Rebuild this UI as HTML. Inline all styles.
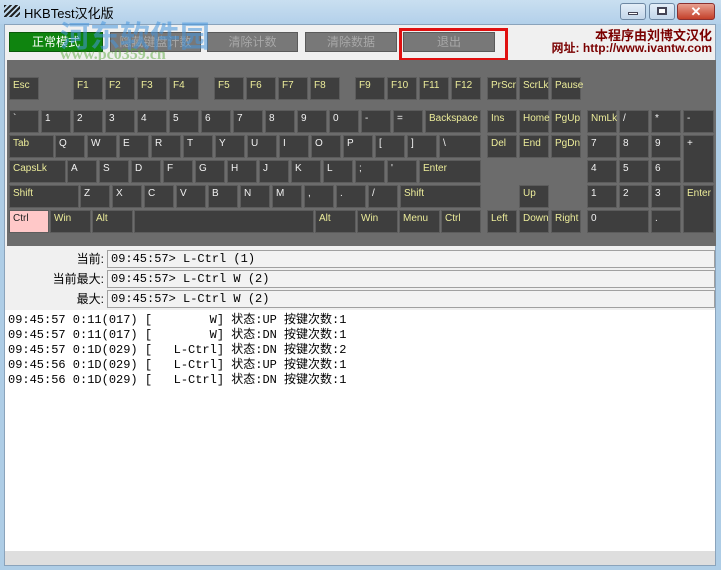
<!DOCTYPE html>
<html><head><meta charset="utf-8"><style>
*{margin:0;padding:0;box-sizing:border-box}
body{width:721px;height:570px;overflow:hidden;background:#aecde6;font-family:"Liberation Sans","Noto Sans CJK SC",sans-serif;position:relative}
.abs{position:absolute}
#title{left:0;top:0;width:721px;height:24px;background:linear-gradient(#c9dff0,#b3d0ea)}
#client{left:4px;top:24px;width:712px;height:542px;background:#f0f0f0;border:1px solid #8aa3bb}
.btn{position:absolute;top:32px;height:20px;background:#787878;border:1px solid #5a5a5a;color:#a8a8a8;font-size:12px;text-align:center;line-height:18px}
#kb{left:7px;top:60px;width:709px;height:186px;background:#6c6c6c}
.k{position:absolute;height:23px;background:#3e3e3e;border:1px solid #5c5c5c;color:#f2f2f2;font-size:10px;padding:2px 0 0 3px;font-family:"Liberation Sans",sans-serif}
.y{color:#ecec9a}
.f{position:absolute;left:107px;width:608px;height:18px;border:1px solid #a0a0a0;background:#f2f2f2;font:12px "Liberation Mono",monospace;line-height:16px;padding-left:3px}
.lb{position:absolute;width:104px;text-align:right;font-size:12px;line-height:18px}
#log{left:5px;top:310px;width:710px;height:241px;background:#fff;font:12px "Liberation Mono","Noto Sans CJK SC",monospace;line-height:15px;padding:3px 0 0 3px;white-space:pre}
</style></head><body>
<div id="title" class="abs"></div>
<div class="abs" style="left:4px;top:5px;width:16px;height:12px;background:repeating-linear-gradient(135deg,#222 0 2px,transparent 2px 4px)"></div>
<div class="abs" style="left:24px;top:3px;font-size:13px;color:#000">HKBTest汉化版</div>
<div class="abs" style="left:620px;top:3px;width:26px;height:17px;border:1px solid #6d87a3;border-radius:3px;background:linear-gradient(#e4eef8,#c3d6ea)"></div>
<div class="abs" style="left:628px;top:12px;width:10px;height:3px;background:#fff;border:1px solid #445"></div>
<div class="abs" style="left:649px;top:3px;width:26px;height:17px;border:1px solid #6d87a3;border-radius:3px;background:linear-gradient(#e4eef8,#c3d6ea)"></div>
<div class="abs" style="left:657px;top:7px;width:10px;height:8px;border:2px solid #445;background:#fff"></div>
<div class="abs" style="left:677px;top:3px;width:38px;height:17px;border:1px solid #8a3030;border-radius:3px;background:linear-gradient(#e8a090,#c4402a);color:#fff;font-size:13px;text-align:center;line-height:15px;font-weight:bold">✕</div>
<div id="client" class="abs"></div>

<div class="btn" style="left:9px;width:94px;background:#0f840f;border-color:#0a5a0a;color:#fff">正常模式</div>
<div class="btn" style="left:110px;width:91px">隐藏键盘计数</div>
<div class="btn" style="left:207px;width:91px">清除计数</div>
<div class="btn" style="left:305px;width:92px">清除数据</div>
<div class="btn" style="left:403px;width:92px">退出</div>
<div class="abs" style="left:399px;top:28px;width:109px;height:33px;border:3px solid #e01010"></div>
<div class="abs" style="right:9px;top:25px;font-size:13px;font-weight:bold;color:#7a0000">本程序由刘博文汉化</div>
<div class="abs" style="right:9px;top:39px;font-size:12px;font-weight:bold;color:#7a0000">网址: http://www.ivantw.com</div>
<div class="abs" style="left:60px;top:12px;font-size:30px;font-weight:bold;color:rgba(70,150,220,.55)">河东软件园</div>
<div class="abs" style="left:60px;top:46px;font-size:16px;font-weight:bold;color:rgba(90,170,60,.5);font-family:'Liberation Serif',serif">www.pc0359.cn</div>

<div id="kb" class="abs">
<div style="position:relative;left:-7px;top:-60px">
<div class="k y" style="left:9px;top:77px;width:30px">Esc</div>
<div class="k y" style="left:73px;top:77px;width:30px">F1</div>
<div class="k y" style="left:105px;top:77px;width:30px">F2</div>
<div class="k y" style="left:137px;top:77px;width:30px">F3</div>
<div class="k y" style="left:169px;top:77px;width:30px">F4</div>
<div class="k y" style="left:214px;top:77px;width:30px">F5</div>
<div class="k y" style="left:246px;top:77px;width:30px">F6</div>
<div class="k y" style="left:278px;top:77px;width:30px">F7</div>
<div class="k y" style="left:310px;top:77px;width:30px">F8</div>
<div class="k y" style="left:355px;top:77px;width:30px">F9</div>
<div class="k y" style="left:387px;top:77px;width:30px">F10</div>
<div class="k y" style="left:419px;top:77px;width:30px">F11</div>
<div class="k y" style="left:451px;top:77px;width:30px">F12</div>
<div class="k y" style="left:487px;top:77px;width:30px">PrScr</div>
<div class="k y" style="left:519px;top:77px;width:30px">ScrLk</div>
<div class="k y" style="left:551px;top:77px;width:30px">Pause</div>

<div class="k" style="left:9px;top:110px;width:30px">`</div>
<div class="k" style="left:41px;top:110px;width:30px">1</div>
<div class="k" style="left:73px;top:110px;width:30px">2</div>
<div class="k" style="left:105px;top:110px;width:30px">3</div>
<div class="k" style="left:137px;top:110px;width:30px">4</div>
<div class="k" style="left:169px;top:110px;width:30px">5</div>
<div class="k" style="left:201px;top:110px;width:30px">6</div>
<div class="k" style="left:233px;top:110px;width:30px">7</div>
<div class="k" style="left:265px;top:110px;width:30px">8</div>
<div class="k" style="left:297px;top:110px;width:30px">9</div>
<div class="k" style="left:329px;top:110px;width:30px">0</div>
<div class="k" style="left:361px;top:110px;width:30px">-</div>
<div class="k" style="left:393px;top:110px;width:30px">=</div>
<div class="k y" style="left:425px;top:110px;width:56px">Backspace</div>
<div class="k y" style="left:487px;top:110px;width:30px">Ins</div>
<div class="k y" style="left:519px;top:110px;width:30px">Home</div>
<div class="k y" style="left:551px;top:110px;width:30px">PgUp</div>
<div class="k y" style="left:587px;top:110px;width:30px">NmLk</div>
<div class="k" style="left:619px;top:110px;width:30px">/</div>
<div class="k" style="left:651px;top:110px;width:30px">*</div>
<div class="k" style="left:683px;top:110px;width:31px">-</div>

<div class="k y" style="left:9px;top:135px;width:45px">Tab</div>
<div class="k" style="left:55px;top:135px;width:30px">Q</div>
<div class="k" style="left:87px;top:135px;width:30px">W</div>
<div class="k" style="left:119px;top:135px;width:30px">E</div>
<div class="k" style="left:151px;top:135px;width:30px">R</div>
<div class="k" style="left:183px;top:135px;width:30px">T</div>
<div class="k" style="left:215px;top:135px;width:30px">Y</div>
<div class="k" style="left:247px;top:135px;width:30px">U</div>
<div class="k" style="left:279px;top:135px;width:30px">I</div>
<div class="k" style="left:311px;top:135px;width:30px">O</div>
<div class="k" style="left:343px;top:135px;width:30px">P</div>
<div class="k" style="left:375px;top:135px;width:30px">[</div>
<div class="k" style="left:407px;top:135px;width:30px">]</div>
<div class="k" style="left:439px;top:135px;width:42px">\</div>
<div class="k y" style="left:487px;top:135px;width:30px">Del</div>
<div class="k y" style="left:519px;top:135px;width:30px">End</div>
<div class="k y" style="left:551px;top:135px;width:30px">PgDn</div>
<div class="k" style="left:587px;top:135px;width:30px">7</div>
<div class="k" style="left:619px;top:135px;width:30px">8</div>
<div class="k" style="left:651px;top:135px;width:30px">9</div>
<div class="k" style="left:683px;top:135px;width:31px;height:48px">+</div>

<div class="k y" style="left:9px;top:160px;width:57px">CapsLk</div>
<div class="k" style="left:67px;top:160px;width:30px">A</div>
<div class="k" style="left:99px;top:160px;width:30px">S</div>
<div class="k" style="left:131px;top:160px;width:30px">D</div>
<div class="k" style="left:163px;top:160px;width:30px">F</div>
<div class="k" style="left:195px;top:160px;width:30px">G</div>
<div class="k" style="left:227px;top:160px;width:30px">H</div>
<div class="k" style="left:259px;top:160px;width:30px">J</div>
<div class="k" style="left:291px;top:160px;width:30px">K</div>
<div class="k" style="left:323px;top:160px;width:30px">L</div>
<div class="k" style="left:355px;top:160px;width:30px">;</div>
<div class="k" style="left:387px;top:160px;width:30px">'</div>
<div class="k y" style="left:419px;top:160px;width:62px">Enter</div>
<div class="k" style="left:587px;top:160px;width:30px">4</div>
<div class="k" style="left:619px;top:160px;width:30px">5</div>
<div class="k" style="left:651px;top:160px;width:30px">6</div>

<div class="k y" style="left:9px;top:185px;width:70px">Shift</div>
<div class="k" style="left:80px;top:185px;width:30px">Z</div>
<div class="k" style="left:112px;top:185px;width:30px">X</div>
<div class="k" style="left:144px;top:185px;width:30px">C</div>
<div class="k" style="left:176px;top:185px;width:30px">V</div>
<div class="k" style="left:208px;top:185px;width:30px">B</div>
<div class="k" style="left:240px;top:185px;width:30px">N</div>
<div class="k" style="left:272px;top:185px;width:30px">M</div>
<div class="k" style="left:304px;top:185px;width:30px">,</div>
<div class="k" style="left:336px;top:185px;width:30px">.</div>
<div class="k" style="left:368px;top:185px;width:30px">/</div>
<div class="k y" style="left:400px;top:185px;width:81px">Shift</div>
<div class="k y" style="left:519px;top:185px;width:30px">Up</div>
<div class="k" style="left:587px;top:185px;width:30px">1</div>
<div class="k" style="left:619px;top:185px;width:30px">2</div>
<div class="k" style="left:651px;top:185px;width:30px">3</div>
<div class="k y" style="left:683px;top:185px;width:31px;height:48px">Enter</div>

<div class="k" style="left:9px;top:210px;width:40px;background:#ffc8c8;color:#222">Ctrl</div>
<div class="k y" style="left:50px;top:210px;width:41px">Win</div>
<div class="k y" style="left:92px;top:210px;width:41px">Alt</div>
<div class="k" style="left:134px;top:210px;width:180px"></div>
<div class="k y" style="left:315px;top:210px;width:41px">Alt</div>
<div class="k y" style="left:357px;top:210px;width:41px">Win</div>
<div class="k y" style="left:399px;top:210px;width:41px">Menu</div>
<div class="k y" style="left:441px;top:210px;width:40px">Ctrl</div>
<div class="k y" style="left:487px;top:210px;width:30px">Left</div>
<div class="k y" style="left:519px;top:210px;width:30px">Down</div>
<div class="k y" style="left:551px;top:210px;width:30px">Right</div>
<div class="k" style="left:587px;top:210px;width:62px">0</div>
<div class="k" style="left:651px;top:210px;width:30px">.</div>
</div></div>

<div class="lb" style="left:0;top:250px">当前:</div>
<div class="f" style="top:250px">09:45:57&gt; L-Ctrl (1)</div>
<div class="lb" style="left:0;top:270px">当前最大:</div>
<div class="f" style="top:270px">09:45:57&gt; L-Ctrl W (2)</div>
<div class="lb" style="left:0;top:290px">最大:</div>
<div class="f" style="top:290px">09:45:57&gt; L-Ctrl W (2)</div>

<div id="log" class="abs">09:45:57 0:11(017) [        W] 状态:UP 按键次数:1
09:45:57 0:11(017) [        W] 状态:DN 按键次数:1
09:45:57 0:1D(029) [   L-Ctrl] 状态:DN 按键次数:2
09:45:56 0:1D(029) [   L-Ctrl] 状态:UP 按键次数:1
09:45:56 0:1D(029) [   L-Ctrl] 状态:DN 按键次数:1</div>
<div class="abs" style="left:5px;top:551px;width:710px;height:14px;background:#dedede"></div>
</body></html>
